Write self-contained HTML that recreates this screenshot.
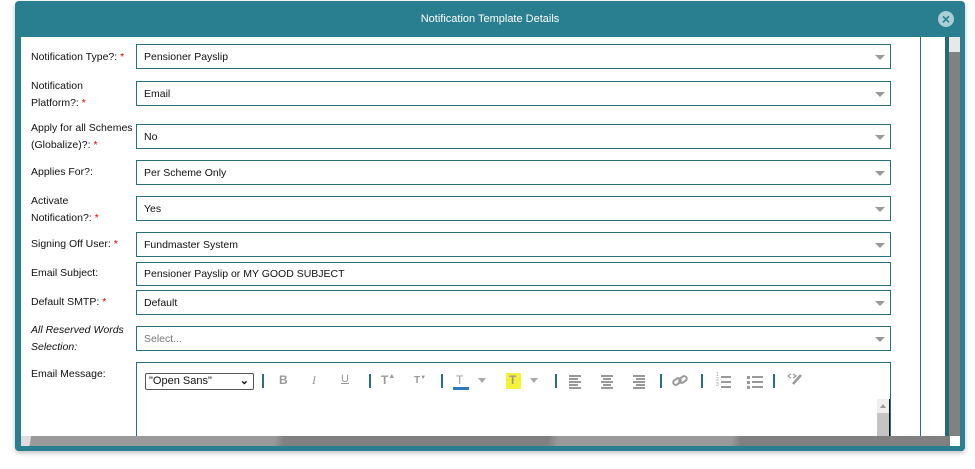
<!DOCTYPE html>
<html><head><style>
*{margin:0;padding:0;box-sizing:border-box}
body{width:975px;height:469px;background:#fff;position:relative;overflow:hidden;font-family:"Liberation Sans",sans-serif;font-size:11px;color:#111}
.a{position:absolute}
.dlg{left:15px;top:1px;width:950px;height:450px;background:#297f8f;border-radius:4px;box-shadow:0 2px 5px rgba(0,0,0,.25)}
.lbl{position:absolute;left:31px;line-height:17px;font-size:10.5px}
.req{color:#d00}
.sel{position:absolute;left:136px;width:755px;height:25px;border:1px solid #2a6f7c;background:#fff;padding-left:7px;line-height:25px;font-size:10.5px}
.sel.dd:after{content:"";position:absolute;right:5px;top:10px;border-left:5px solid transparent;border-right:5px solid transparent;border-top:5px solid #999}
.sep{position:absolute;top:374px;width:2px;height:14px;background:#2a6f7c}
.ic{position:absolute;top:373px;color:#999;font-size:12px;font-weight:bold}
.ar{position:absolute;top:378px;border-left:4px solid transparent;border-right:4px solid transparent;border-top:5px solid #aaa}
.ln{position:absolute;height:1.5px;background:#999}
</style></head><body>
<div class="a dlg"></div>
<div class="a" style="left:15px;top:1px;width:950px;height:36px;color:#fff;text-align:center;line-height:36px;font-size:11px">Notification Template Details</div>
<div class="a" style="left:938px;top:11px;width:16px;height:16px;border-radius:50%;background:#a9ced6;color:#297f8f;font-size:14px;font-weight:bold;text-align:center;line-height:16px">×</div>
<div class="a" style="left:21px;top:37px;width:924px;height:399px;background:#fff"></div>
<div class="a" style="left:920px;top:37px;width:1px;height:399px;background:#2a6f7c"></div>
<div class="a" style="left:945px;top:37px;width:4px;height:399px;background:#1f6b7a"></div>
<div class="a" style="left:949px;top:37px;width:11px;height:400px;background:#e8e8e8"></div>
<div class="a" style="left:949px;top:52px;width:11px;height:384px;background:#818181"></div>

<div class="lbl" style="top:49px">Notification Type?: <span class="req">*</span></div>
<div class="sel dd" style="top:44px">Pensioner Payslip</div>
<div class="lbl" style="top:78px">Notification<br>Platform?: <span class="req">*</span></div>
<div class="sel dd" style="top:81px">Email</div>
<div class="lbl" style="top:120px">Apply for all Schemes<br>(Globalize)?: <span class="req">*</span></div>
<div class="sel dd" style="top:124px">No</div>
<div class="lbl" style="top:164px">Applies For?:</div>
<div class="sel dd" style="top:160px">Per Scheme Only</div>
<div class="lbl" style="top:193px">Activate<br>Notification?: <span class="req">*</span></div>
<div class="sel dd" style="top:196px">Yes</div>
<div class="lbl" style="top:236px">Signing Off User: <span class="req">*</span></div>
<div class="sel dd" style="top:232px">Fundmaster System</div>
<div class="lbl" style="top:265px">Email Subject:</div>
<div class="sel" style="top:262px;height:24px;line-height:23px">Pensioner Payslip or MY GOOD SUBJECT</div>
<div class="lbl" style="top:294px">Default SMTP: <span class="req">*</span></div>
<div class="sel dd" style="top:290px">Default</div>
<div class="lbl" style="top:322px;font-style:italic">All Reserved Words<br>Selection:</div>
<div class="sel dd" style="top:326px;color:#777">Select...</div>
<div class="lbl" style="top:366px">Email Message:</div>
<div class="a" style="left:136px;top:362px;width:755px;height:80px;border:1px solid #2a6f7c;border-bottom:none;background:#fff"></div>
<div class="a" style="left:145px;top:373px;width:109px;height:17px;border:1px solid #555;border-radius:2px;font-size:11px;line-height:15px;padding-left:3px">"Open Sans"<span style="position:absolute;right:4px;top:0;font-weight:bold">⌄</span></div>
<div class="sep" style="left:262px"></div><div class="sep" style="left:369px"></div><div class="sep" style="left:441px"></div><div class="sep" style="left:555px"></div><div class="sep" style="left:660px"></div><div class="sep" style="left:701px"></div><div class="sep" style="left:773px"></div>
<div class="ic" style="left:279px">B</div>
<div class="ic" style="left:312px;font-style:italic;font-weight:normal;font-family:'Liberation Serif',serif">I</div>
<div class="ic" style="left:341px;text-decoration:underline;font-weight:normal;font-size:11px">U</div>
<div class="ic" style="left:381px">T<span style="font-size:7px;vertical-align:top">▲</span></div>
<div class="ic" style="left:414px;font-size:10px;top:375px">T<span style="font-size:6px;vertical-align:top">▼</span></div>
<div class="ic" style="left:456px;font-weight:normal">T</div>
<div class="a" style="left:453px;top:387px;width:16px;height:3px;background:#2b7bbf"></div>
<div class="ar" style="left:478px"></div>
<div class="a" style="left:506px;top:373px;width:15px;height:16px;background:#f5f23a"></div>
<div class="ic" style="left:509px">T</div>
<div class="ar" style="left:530px"></div>
<div class="ln" style="left:569px;top:375px;width:12px"></div><div class="ln" style="left:569px;top:378px;width:9px"></div><div class="ln" style="left:569px;top:381px;width:12px"></div><div class="ln" style="left:569px;top:384px;width:9px"></div><div class="ln" style="left:569px;top:387px;width:12px"></div>
<div class="ln" style="left:601px;top:375px;width:12px"></div><div class="ln" style="left:603px;top:378px;width:8px"></div><div class="ln" style="left:601px;top:381px;width:12px"></div><div class="ln" style="left:603px;top:384px;width:8px"></div><div class="ln" style="left:601px;top:387px;width:12px"></div>
<div class="ln" style="left:633px;top:375px;width:12px"></div><div class="ln" style="left:636px;top:378px;width:9px"></div><div class="ln" style="left:633px;top:381px;width:12px"></div><div class="ln" style="left:636px;top:384px;width:9px"></div><div class="ln" style="left:633px;top:387px;width:12px"></div>
<svg class="a" style="left:672px;top:374px" width="16" height="14"><g fill="none" stroke="#999" stroke-width="2"><rect x="1" y="5" width="8" height="5" rx="2.5" transform="rotate(-35 5 7.5)"/><rect x="7" y="3" width="8" height="5" rx="2.5" transform="rotate(-35 11 5.5)"/></g></svg>
<div class="ln" style="left:721px;top:376px;width:10px"></div><div class="ln" style="left:721px;top:381px;width:10px"></div><div class="ln" style="left:721px;top:386px;width:10px"></div>
<div class="a" style="left:716px;top:373px;font-size:5px;line-height:5px;color:#999">1<br>2<br>3</div>
<div class="ln" style="left:752px;top:376px;width:11px"></div><div class="ln" style="left:752px;top:381px;width:11px"></div><div class="ln" style="left:752px;top:386px;width:11px"></div>
<div class="ln" style="left:747px;top:375.5px;width:3px;height:3px"></div><div class="ln" style="left:747px;top:380.5px;width:3px;height:3px"></div><div class="ln" style="left:747px;top:385.5px;width:3px;height:3px"></div>
<svg class="a" style="left:787px;top:373px" width="16" height="14"><path d="M4 1 L1 3 L4 5 M6 1 L9 3 L6 5" fill="none" stroke="#999" stroke-width="1.2"/><path d="M14 2 L6 11" stroke="#999" stroke-width="2.5"/></svg>
<div class="a" style="left:877px;top:399px;width:12px;height:37px;background:#c4c4c4"></div>
<div class="a" style="left:877px;top:399px;width:12px;height:14px;background:#eee"></div>
<div class="a" style="left:880px;top:404px;border-left:3px solid transparent;border-right:3px solid transparent;border-bottom:4px solid #999"></div>
<div class="a" style="left:889px;top:399px;width:1px;height:37px;background:#111"></div>

<div class="a" style="left:21px;top:436px;width:929px;height:10px;background:linear-gradient(100deg,#ddd 0 10px,#9a9a9a 10px 250px,#808080 260px 520px,#9a9a9a 530px 700px,#808080 710px)"></div>
<div class="a" style="left:950px;top:436px;width:10px;height:10px;background:#fff"></div>
<div class="a" style="left:15px;top:446px;width:950px;height:5px;background:#297f8f;border-radius:0 0 4px 4px"></div>
</body></html>
